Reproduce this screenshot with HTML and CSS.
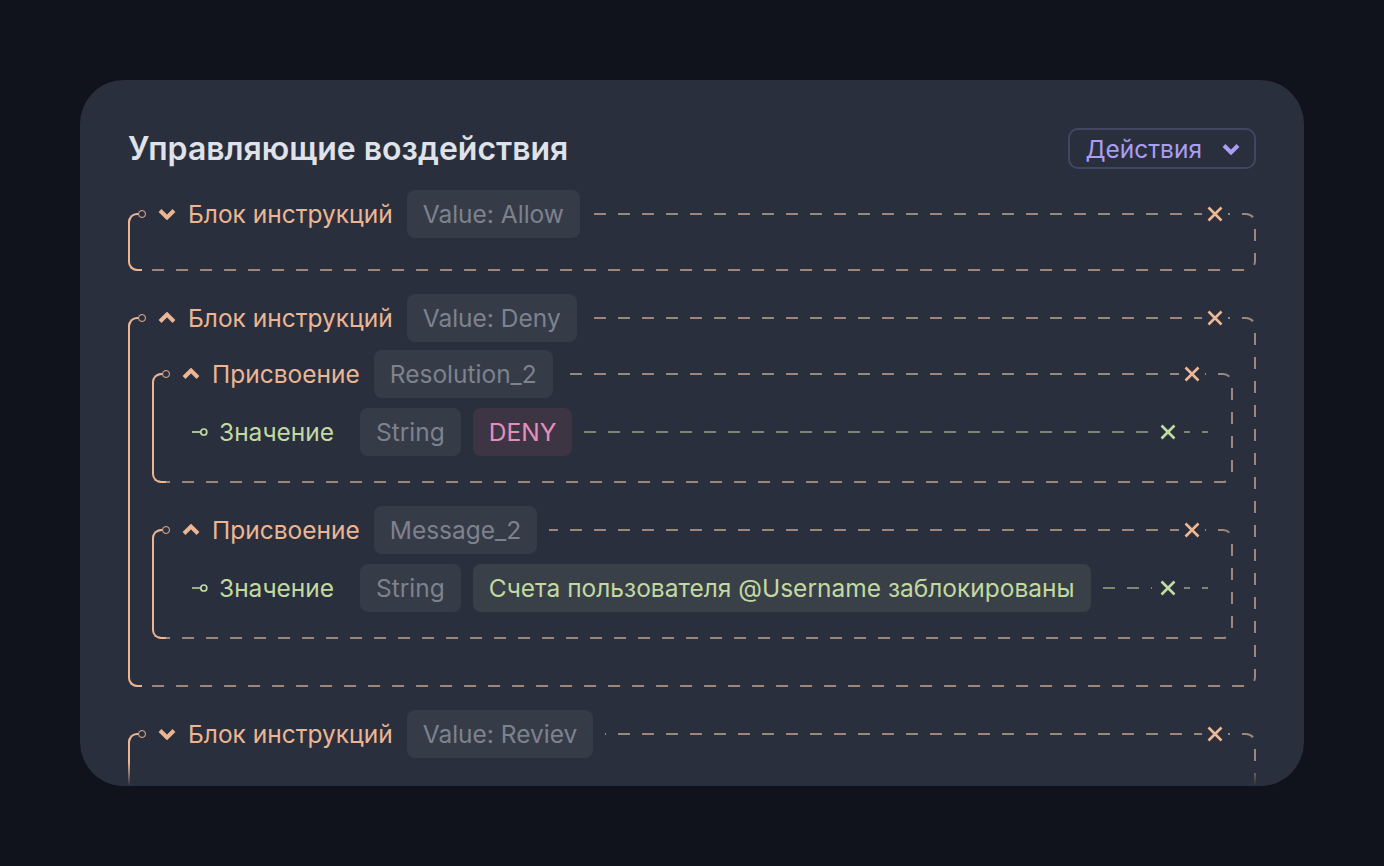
FILE: index.html
```html
<!DOCTYPE html>
<html lang="ru">
<head>
  <meta charset="UTF-8">
  <title>Управляющие воздействия</title>
  <link rel="stylesheet" href="styles.css">
</head>
<body>
  <div class="card">
    <div class="card-header">
      <h2>Управляющие воздействия</h2>
      <button class="actions-btn">
        Действия
        <svg class="chevron" viewBox="0 0 18 12"><polyline points="2,2.5 9,9.5 16,2.5"/></svg>
      </button>
    </div>

    <!-- collapsed block -->
    <div class="block">
      <svg class="frame"><rect/></svg>
      <div class="block-head">
        <div class="head-main">
          <span class="knob"></span>
          <svg class="chevron" viewBox="0 0 18 12"><polyline points="2,2.5 9,9.5 16,2.5"/></svg>
          <span class="head-title">Блок инструкций</span>
          <span class="tag">Value: Allow</span>
        </div>
        <button class="remove"><svg viewBox="0 0 16 16"><path d="M1.5 1.5 14.5 14.5M14.5 1.5 1.5 14.5"/></svg></button>
      </div>
      <div class="block-body"></div>
    </div>

    <!-- expanded block -->
    <div class="block">
      <svg class="frame"><rect/></svg>
      <div class="block-head">
        <div class="head-main">
          <span class="knob"></span>
          <svg class="chevron" viewBox="0 0 18 12"><polyline points="2,9.5 9,2.5 16,9.5"/></svg>
          <span class="head-title">Блок инструкций</span>
          <span class="tag">Value: Deny</span>
        </div>
        <button class="remove"><svg viewBox="0 0 16 16"><path d="M1.5 1.5 14.5 14.5M14.5 1.5 1.5 14.5"/></svg></button>
      </div>
      <div class="block-body">

        <div class="block">
          <svg class="frame"><rect/></svg>
          <div class="block-head">
            <div class="head-main">
              <span class="knob"></span>
              <svg class="chevron" viewBox="0 0 18 12"><polyline points="2,9.5 9,2.5 16,9.5"/></svg>
              <span class="head-title">Присвоение</span>
              <span class="tag">Resolution_2</span>
            </div>
            <button class="remove"><svg viewBox="0 0 16 16"><path d="M1.5 1.5 14.5 14.5M14.5 1.5 1.5 14.5"/></svg></button>
          </div>
          <div class="assign-body">
            <div class="value-row">
              <svg class="pin" viewBox="0 0 18 10"><path d="M0 5H9"/><circle cx="12.5" cy="5" r="3.2"/></svg>
              <span class="value-label">Значение</span>
              <span class="tag">String</span>
              <span class="tag danger">DENY</span>
              <span class="leader"></span>
              <button class="remove green"><svg viewBox="0 0 16 16"><path d="M1.5 1.5 14.5 14.5M14.5 1.5 1.5 14.5"/></svg></button>
              <span class="tail"></span>
            </div>
          </div>
        </div>

        <div class="block">
          <svg class="frame"><rect/></svg>
          <div class="block-head">
            <div class="head-main">
              <span class="knob"></span>
              <svg class="chevron" viewBox="0 0 18 12"><polyline points="2,9.5 9,2.5 16,9.5"/></svg>
              <span class="head-title">Присвоение</span>
              <span class="tag">Message_2</span>
            </div>
            <button class="remove"><svg viewBox="0 0 16 16"><path d="M1.5 1.5 14.5 14.5M14.5 1.5 1.5 14.5"/></svg></button>
          </div>
          <div class="assign-body">
            <div class="value-row">
              <svg class="pin" viewBox="0 0 18 10"><path d="M0 5H9"/><circle cx="12.5" cy="5" r="3.2"/></svg>
              <span class="value-label">Значение</span>
              <span class="tag">String</span>
              <span class="tag text">Счета пользователя @Username заблокированы</span>
              <span class="leader"></span>
              <button class="remove green"><svg viewBox="0 0 16 16"><path d="M1.5 1.5 14.5 14.5M14.5 1.5 1.5 14.5"/></svg></button>
              <span class="tail"></span>
            </div>
          </div>
        </div>

      </div>
    </div>

    <div class="block">
      <svg class="frame"><rect/></svg>
      <div class="block-head">
        <div class="head-main">
          <span class="knob"></span>
          <svg class="chevron" viewBox="0 0 18 12"><polyline points="2,2.5 9,9.5 16,2.5"/></svg>
          <span class="head-title">Блок инструкций</span>
          <span class="tag">Value: Reviev</span>
        </div>
        <button class="remove"><svg viewBox="0 0 16 16"><path d="M1.5 1.5 14.5 14.5M14.5 1.5 1.5 14.5"/></svg></button>
      </div>
      <div class="block-body"></div>
    </div>
  </div>
</body>
</html>
```

FILE: styles.css
```css
* {
  box-sizing: border-box;
}

body {
  margin: 0;
  padding: 80px;
  background-color: #10131b;
  font-family: Inter, 'Noto Sans', sans-serif;
}

.card {
  position: relative;
  width: 1224px;
  height: 706px;
  padding: 48px 48px 0;
  border-radius: 44px;
  background: #2a2f3d;
  overflow: hidden;
}

/* bottom fade over the cut-off block */
.card::after {
  content: '';
  position: absolute;
  left: 0;
  right: 0;
  bottom: 0;
  height: 24px;
  background: linear-gradient(rgba(42, 47, 61, 0), #2a2f3d);
}

.card-header {
  display: flex;
  justify-content: space-between;
  align-items: center;
  margin-bottom: 21px;
}

.card-header h2 {
  margin: 0;
  font-size: 32px;
  font-weight: 600;
  line-height: 41px;
  color: #dfe2e8;
}

.actions-btn {
  display: flex;
  align-items: center;
  gap: 20px;
  height: 41px;
  padding: 0 14px 0 15px;
  border: 2px solid #42475f;
  border-radius: 10px;
  background: transparent;
  font-family: inherit;
  font-size: 24.5px;
  color: #ab9df4;
  cursor: pointer;
}

.actions-btn .chevron {
  stroke: #ab9df4;
}

.chevron {
  width: 18px;
  height: 12px;
  fill: none;
  stroke: #ebb693;
  stroke-width: 4;
  stroke-linejoin: miter;
}

/* block with dashed frame and solid left bracket */
.block {
  position: relative;
  isolation: isolate;
  margin-bottom: 23px;
}

.frame {
  position: absolute;
  left: 0;
  top: 23px;
  width: 100%;
  height: calc(100% - 23px);
  z-index: 0;
  pointer-events: none;
}

.frame rect {
  x: 1px;
  y: 1px;
  width: calc(100% - 2px);
  height: calc(100% - 2px);
  rx: 9px;
  fill: none;
  stroke: #9d877c;
  stroke-width: 2;
  stroke-dasharray: 12 12;
}

.block::after {
  content: '';
  position: absolute;
  left: 0;
  top: 23px;
  bottom: 0;
  width: 12px;
  border: 2px solid #ebb693;
  border-right: 0;
  border-radius: 9px 0 0 9px;
  z-index: 1;
}

.block-head {
  position: relative;
  z-index: 2;
  display: flex;
  justify-content: space-between;
  align-items: center;
  height: 48px;
}

.head-main {
  display: flex;
  align-items: center;
  gap: 12px;
  height: 48px;
  margin-left: 10px;
  padding-right: 12px;
  background: #2a2f3d;
}

.knob {
  width: 8px;
  height: 8px;
  border: 1.6px solid #ebb693;
  border-radius: 50%;
  background: #2a2f3d;
}

.head-title {
  font-size: 24.5px;
  color: #ebb693;
  margin-right: 2px;
}

.tag {
  display: flex;
  align-items: center;
  height: 48px;
  padding: 0 16px;
  border-radius: 8px;
  background: #363b48;
  font-size: 24.5px;
  color: #7d828d;
  white-space: nowrap;
}

.tag.danger {
  background: #3e3544;
  color: #e48fba;
}

.tag.text {
  background: #3a4047;
  color: #c2d9a2;
}

.remove {
  display: flex;
  padding: 0 5px;
  margin-right: 28px;
  border: none;
  background: #2a2f3d;
  cursor: pointer;
}

.remove svg {
  width: 16px;
  height: 16px;
  fill: none;
  stroke: #efb995;
  stroke-width: 2.6;
}

.block-body {
  padding: 8px 23px 25px 24px;
}

.assign-body {
  padding: 10px 23px 27px 24px;
}

/* value row inside an assignment */
.value-row {
  display: flex;
  align-items: center;
  gap: 12px;
  height: 48px;
  padding-left: 16px;
}

.pin {
  width: 17px;
  height: 10px;
  margin-right: -2px;
  fill: none;
  stroke: #c2d9a2;
  stroke-width: 1.8;
}

.value-label {
  width: 129px;
  font-size: 24.5px;
  color: #c2d9a2;
}

.leader {
  flex: 1;
  height: 2px;
  background: repeating-linear-gradient(90deg, #7b8870 0 12px, transparent 12px 24px);
}

.remove.green {
  padding: 0;
  margin: 0 -4px;
  background: transparent;
}

.remove.green svg {
  stroke: #c5dba5;
}

.tail {
  width: 26px;
  height: 2px;
  background: repeating-linear-gradient(90deg, #7b8870 0 6px, transparent 6px 18px);
}
```
